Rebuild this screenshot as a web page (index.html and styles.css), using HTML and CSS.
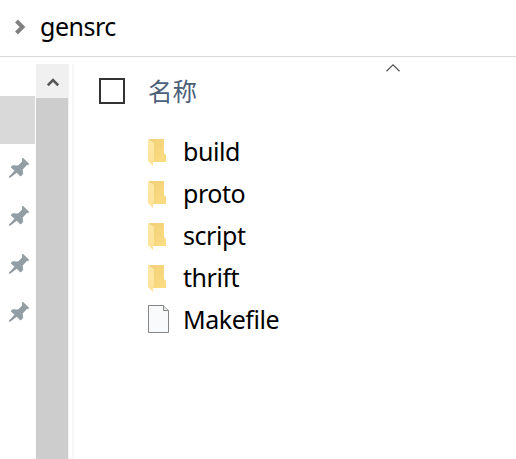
FILE: index.html
```
<!DOCTYPE html>
<html lang="zh-CN">
<head>
<meta charset="utf-8">
<title>gensrc</title>
<link rel="stylesheet" href="styles.css">
</head>
<body>
<svg class="defs" width="0" height="0">
  <defs>
    <linearGradient id="back" x1="0" y1="0" x2="1" y2="1"><stop offset="0" stop-color="#f0cf78"/><stop offset="1" stop-color="#fddd82"/></linearGradient>
    <linearGradient id="front" x1="0" y1="0" x2="0" y2="1"><stop offset="0" stop-color="#ffe8a6"/><stop offset="1" stop-color="#ffe297"/></linearGradient>
    <symbol id="pin" viewBox="0 0 20 20"><path d="M13.4 0h.8L20 5.800v.8l-2.300.6-4 4.300.5 4.200-2.200 2.500h-.8l-3.500-3.500L1.200 19.800H0v-1.300l5.500-5.700L2 9.400v-.9l2-1.200 5 .3 4.200-4.200-.4-2.200z" fill="#929da4"/></symbol>
    <symbol id="folder" viewBox="0 0 19 28"><path d="M1 0h15v14l2 2v7H5z" fill="url(#back)"/><path d="M0 0l6 4v17l-1 1v5L0 22z" fill="url(#front)"/></symbol>
    <symbol id="file" viewBox="0 0 21 28"><path d="M.5.5h15l5 5v22H.5z" fill="#f8fafb" stroke="#858585"/><path d="M15.500.5v5h5" fill="#e6e6e6" stroke="#858585"/></symbol>
  </defs>
</svg>
<header class="address">
  <svg class="crumb" width="11" height="16" viewBox="0 0 11 16"><path d="M1.500 2l6 6-6 6" fill="none" stroke="#808080" stroke-width="4"/></svg>
  <span class="path">gensrc</span>
</header>
<main class="body">
  <nav class="side">
    <div class="selected"></div>
    <div class="quick"><svg width="20" height="20"><use href="#pin"/></svg></div>
    <div class="quick"><svg width="20" height="20"><use href="#pin"/></svg></div>
    <div class="quick"><svg width="20" height="20"><use href="#pin"/></svg></div>
    <div class="quick"><svg width="20" height="20"><use href="#pin"/></svg></div>
  </nav>
  <div class="scrollbar">
    <div class="up"><svg width="12" height="9" viewBox="0 0 12 9"><path d="M.8 7.300L6 2l5.200 5.300" fill="none" stroke="#555" stroke-width="2.600"/></svg></div>
    <div class="thumb"></div>
  </div>
  <section class="files">
    <div class="heading">
      <span class="check"></span>
      <span class="name">名称</span>
      <svg class="sort" width="14" height="8" viewBox="0 0 14 8"><path d="M.5 7.200L7 .9l6.500 6.300" fill="none" stroke="#555" stroke-width="1.200"/></svg>
    </div>
    <div class="row"><svg width="19" height="28"><use href="#folder"/></svg><span class="build">build</span></div>
    <div class="row"><svg width="19" height="28"><use href="#folder"/></svg><span class="proto">proto</span></div>
    <div class="row"><svg width="19" height="28"><use href="#folder"/></svg><span class="script">script</span></div>
    <div class="row"><svg width="19" height="28"><use href="#folder"/></svg><span class="thrift">thrift</span></div>
    <div class="row"><svg class="document" width="21" height="28"><use href="#file"/></svg><span class="makefile">Makefile</span></div>
  </section>
</main>
</body>
</html>
```
FILE: styles.css
```
* { box-sizing: border-box; }
body {
  margin: 0;
  height: 459px;
  overflow: hidden;
  display: flex;
  flex-direction: column;
  background: #fff;
  color: #000;
  font: 25px/42px "Noto Sans", "Open Sans", "Noto Sans CJK SC", sans-serif;
}
svg { display: block; flex: none; }
.defs { position: absolute; }
.address {
  flex: none;
  height: 57px;
  padding: 5px 0 0 15px;
  display: flex;
  border-bottom: 1px solid #d9d9d9;
}
.crumb { margin: 14px 14px 0 0; }
.path { letter-spacing: -0.5px; }
.body { flex: 1; display: flex; min-height: 0; }
.side { width: 36px; padding-top: 39px; }
.selected { width: 35px; height: 48px; background: #d9d9d9; }
.quick { height: 48px; padding: 14px 0 0 9px; }
.scrollbar {
  width: 33px;
  margin-top: 7px;
  display: flex;
  flex-direction: column;
  background: #f0f0f0;
}
.up { height: 34px; padding: 14px 0 0 11px; }
.thumb { flex: 1; width: 32px; background: #cdcdcd; }
.files {
  flex: 1;
  margin: 7px 0 0 3px;
  padding-left: 25px;
  border-left: 2px solid #f7f7f7;
}
.heading { height: 66px; display: flex; }
.check { width: 26px; height: 26px; margin-top: 14px; border: 2px solid #333; }
.name {
  width: 238px;
  margin: 6px 0 0 23px;
  color: #4c607a;
  font: 24.500px/42px "Noto Sans CJK SC", sans-serif;
}
.row { height: 42px; padding-left: 49px; display: flex; align-items: flex-start; }
.row svg { margin-top: 9px; }
.row .document { margin-top: 7px; }
.row span { margin-left: 16px; letter-spacing: -0.45px; }
.row .makefile { margin-left: 14px; }
```
